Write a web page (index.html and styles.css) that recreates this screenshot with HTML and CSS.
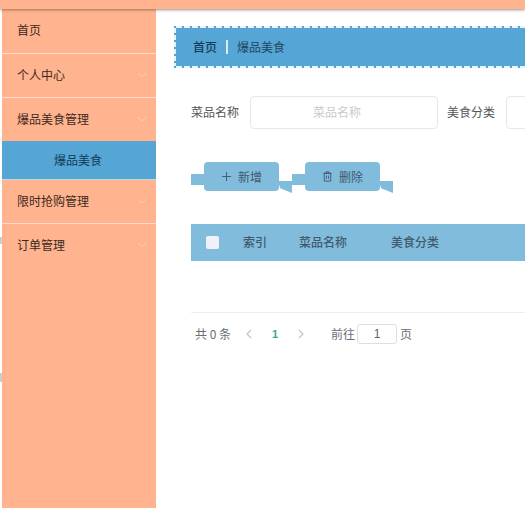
FILE: index.html
```html
<!DOCTYPE html>
<html lang="zh">
<head>
<meta charset="utf-8">
<title>爆品美食</title>
<link rel="stylesheet" href="styles.css">
</head>
<body>
<header class="topbar"></header>
<span class="edge edge-a"></span>
<span class="edge edge-b"></span>
<div class="layout">
  <nav class="sidebar">
    <div class="menu-item first">首页</div>
    <div class="menu-item">个人中心<svg class="chev" viewBox="0 0 10 6"><path d="M1 1l4 4 4-4"/></svg></div>
    <div class="menu-item">爆品美食管理<svg class="chev" viewBox="0 0 10 6"><path d="M1 1l4 4 4-4"/></svg></div>
    <div class="sub-item">爆品美食</div>
    <div class="menu-item">限时抢购管理<svg class="chev" viewBox="0 0 10 6"><path d="M1 1l4 4 4-4"/></svg></div>
    <div class="menu-item">订单管理<svg class="chev" viewBox="0 0 10 6"><path d="M1 1l4 4 4-4"/></svg></div>
  </nav>
  <main class="content">
    <div class="crumb"><strong>首页</strong><i class="crumb-sep"></i><span>爆品美食</span></div>
    <form class="filters">
      <label class="f-label">菜品名称</label>
      <div class="f-input wide">菜品名称</div>
      <label class="f-label">美食分类</label>
      <div class="f-input"></div>
    </form>
    <div class="actions">
      <button class="ribbon" type="button"><svg class="ico" viewBox="0 0 12 12"><path d="M6 1v10M1 6h10"/></svg>新增</button>
      <button class="ribbon" type="button"><svg class="ico" viewBox="0 0 12 12"><path d="M2.500 2.500h7v8.500h-7zM1.500 2.500h9M4.500 2.500V1h3v1.500M4.800 5v3.500M7.200 5v3.500"/></svg>删除</button>
    </div>
    <div class="thead">
      <span class="check"></span>
      <span class="th th-index">索引</span>
      <span class="th th-name">菜品名称</span>
      <span class="th">美食分类</span>
    </div>
    <div class="tbody"></div>
    <div class="pager">
      <span class="total">共 0 条</span>
      <svg class="pg-arrow" viewBox="0 0 6 10"><path d="M5 1L1 5l4 4"/></svg>
      <b class="pg-num">1</b>
      <svg class="pg-arrow" viewBox="0 0 6 10"><path d="M1 1l4 4-4 4"/></svg>
      <span class="goto">前往</span>
      <span class="pg-input">1</span>
      <span>页</span>
    </div>
  </main>
</div>
</body>
</html>
```
FILE: styles.css
```css
* { box-sizing: border-box; }
html, body { margin: 0; height: 100%; }
body {
  width: 525px;
  height: 508px;
  overflow: hidden;
  position: relative;
  display: flex;
  flex-direction: column;
  background: #fff;
  font: 12px/1 "Noto Sans CJK SC", "Liberation Sans", sans-serif;
  color: #333;
}
.topbar {
  height: 9px;
  flex: none;
  background: #ffb48f;
  box-shadow: 0 1px 3px rgba(90, 70, 60, .6);
  position: relative;
  z-index: 2;
}
.edge { position: absolute; left: 0; width: 2px; background: #c9ced2; }
.edge-a { top: 237px; height: 7px; }
.edge-b { top: 373px; height: 9px; }
.layout { flex: 1; display: flex; min-height: 0; }
.sidebar {
  width: 154px;
  margin-left: 2px;
  flex: none;
  background: #ffb48f;
}
.menu-item {
  height: 44px;
  padding: 0 9px 2px 15px;
  display: flex;
  align-items: center;
  justify-content: space-between;
  color: #3c2a20;
  border-bottom: 1px solid #ffdcc9;
}
.menu-item.first { height: 45px; padding-bottom: 2px; }
.menu-item:nth-child(3) { border-bottom: 0; height: 43px; }
.menu-item:last-child { border-bottom: 0; }
.chev { width: 10px; height: 6px; fill: none; stroke: #ffcdb3; stroke-width: 1; }
.sub-item {
  height: 39px;
  padding-right: 2px;
  background: #55a6d4;
  color: #123a55;
  text-align: center;
  line-height: 38px;
  border-bottom: 1px solid #bfd9e6;
}
.content {
  flex: none;
  width: 369px;
  overflow: hidden;
  padding: 17px 0 0 18px;
}
.crumb {
  width: 380px;
  height: 42px;
  padding: 0 0 0 19px;
  display: flex;
  align-items: center;
  color: #1f4560;
  background:
    linear-gradient(#55a6d4, #55a6d4) 2px 2px / calc(100% - 2px) calc(100% - 4px) no-repeat,
    repeating-linear-gradient(90deg, #5c9fc8 0 2px, #e6f3fa 2px 8px) 0 0 / 100% 2px no-repeat,
    repeating-linear-gradient(90deg, #5c9fc8 0 2px, #e6f3fa 2px 8px) 0 100% / 100% 2px no-repeat,
    repeating-linear-gradient(180deg, #5c9fc8 0 2px, #e6f3fa 2px 7px) 0 0 / 2px 100% no-repeat;
}
.crumb strong { font-weight: 500; color: #163a54; }
.crumb-sep { width: 2px; height: 14px; margin: 0 9px; background: #d5ecf8; }
.filters {
  margin: 28px 0 0 17px;
  width: 400px;
  display: flex;
  align-items: center;
  height: 33px;
}
.f-label { width: 59px; flex: none; padding-bottom: 2px; color: #555; }
.f-input {
  width: 188px;
  flex: none;
  height: 33px;
  border: 1px solid #e8e8ea;
  border-radius: 4px;
  display: flex;
  align-items: center;
  justify-content: center;
  padding: 0 14px 2px 0;
  color: #c8cad0;
  background: #fff;
}
.f-input.wide { margin-right: 9px; }
.actions {
  margin: 33px 0 0 30px;
  display: flex;
  gap: 26px;
  height: 29px;
}
.ribbon {
  position: relative;
  width: 75px;
  height: 29px;
  padding: 0;
  border: 0;
  border-radius: 4px;
  background: #82bcdd;
  color: #41596a;
  font: inherit;
  display: flex;
  align-items: center;
  justify-content: center;
}
.ribbon::before {
  content: "";
  position: absolute;
  left: -13px;
  top: 12px;
  width: 13px;
  height: 11px;
  background: #82bcdd;
}
.ribbon::after {
  content: "";
  position: absolute;
  right: -13px;
  top: 19px;
  width: 14px;
  height: 12px;
  background: #82bcdd;
  clip-path: polygon(0 0, 100% 0, 100% 100%, 15% 60%);
}
.ico { width: 11px; height: 11px; margin-right: 6px; fill: none; stroke: #41596a; stroke-width: 1; }
.thead {
  margin: 33px 0 0 17px;
  width: 400px;
  height: 37px;
  background: #82bcdd;
  display: flex;
  align-items: center;
  padding: 0 0 1px 15px;
}
.check {
  width: 13px;
  height: 13px;
  border-radius: 2px;
  background: #eef2f8;
  margin-right: 24px;
}
.th { font-weight: 500; color: #3f5a6c; }
.th-index { width: 56px; }
.th-name { width: 92px; }
.tbody {
  margin-left: 17px;
  width: 400px;
  height: 52px;
  border-bottom: 1px solid #edeef0;
}
.pager {
  margin: 10px 0 0 21px;
  height: 22px;
  display: flex;
  align-items: center;
  color: #6b6e73;
}
.total { width: 51px; }
.pg-arrow { width: 6px; height: 10px; flex: none; fill: none; stroke: #bfc3ca; stroke-width: 1.200; }
.pg-num { width: 46px; text-align: center; color: #31b08f; font-weight: 700; font-size: 11px; font-family: "Liberation Sans", sans-serif; }
.goto { margin-left: 27px; margin-right: 2px; }
.pg-input {
  width: 40px;
  height: 20px;
  margin-right: 3px;
  border: 1px solid #dcdfe6;
  border-radius: 3px;
  display: flex;
  align-items: center;
  justify-content: center;
  font-family: "Liberation Sans", sans-serif;
  color: #606266;
}
```
